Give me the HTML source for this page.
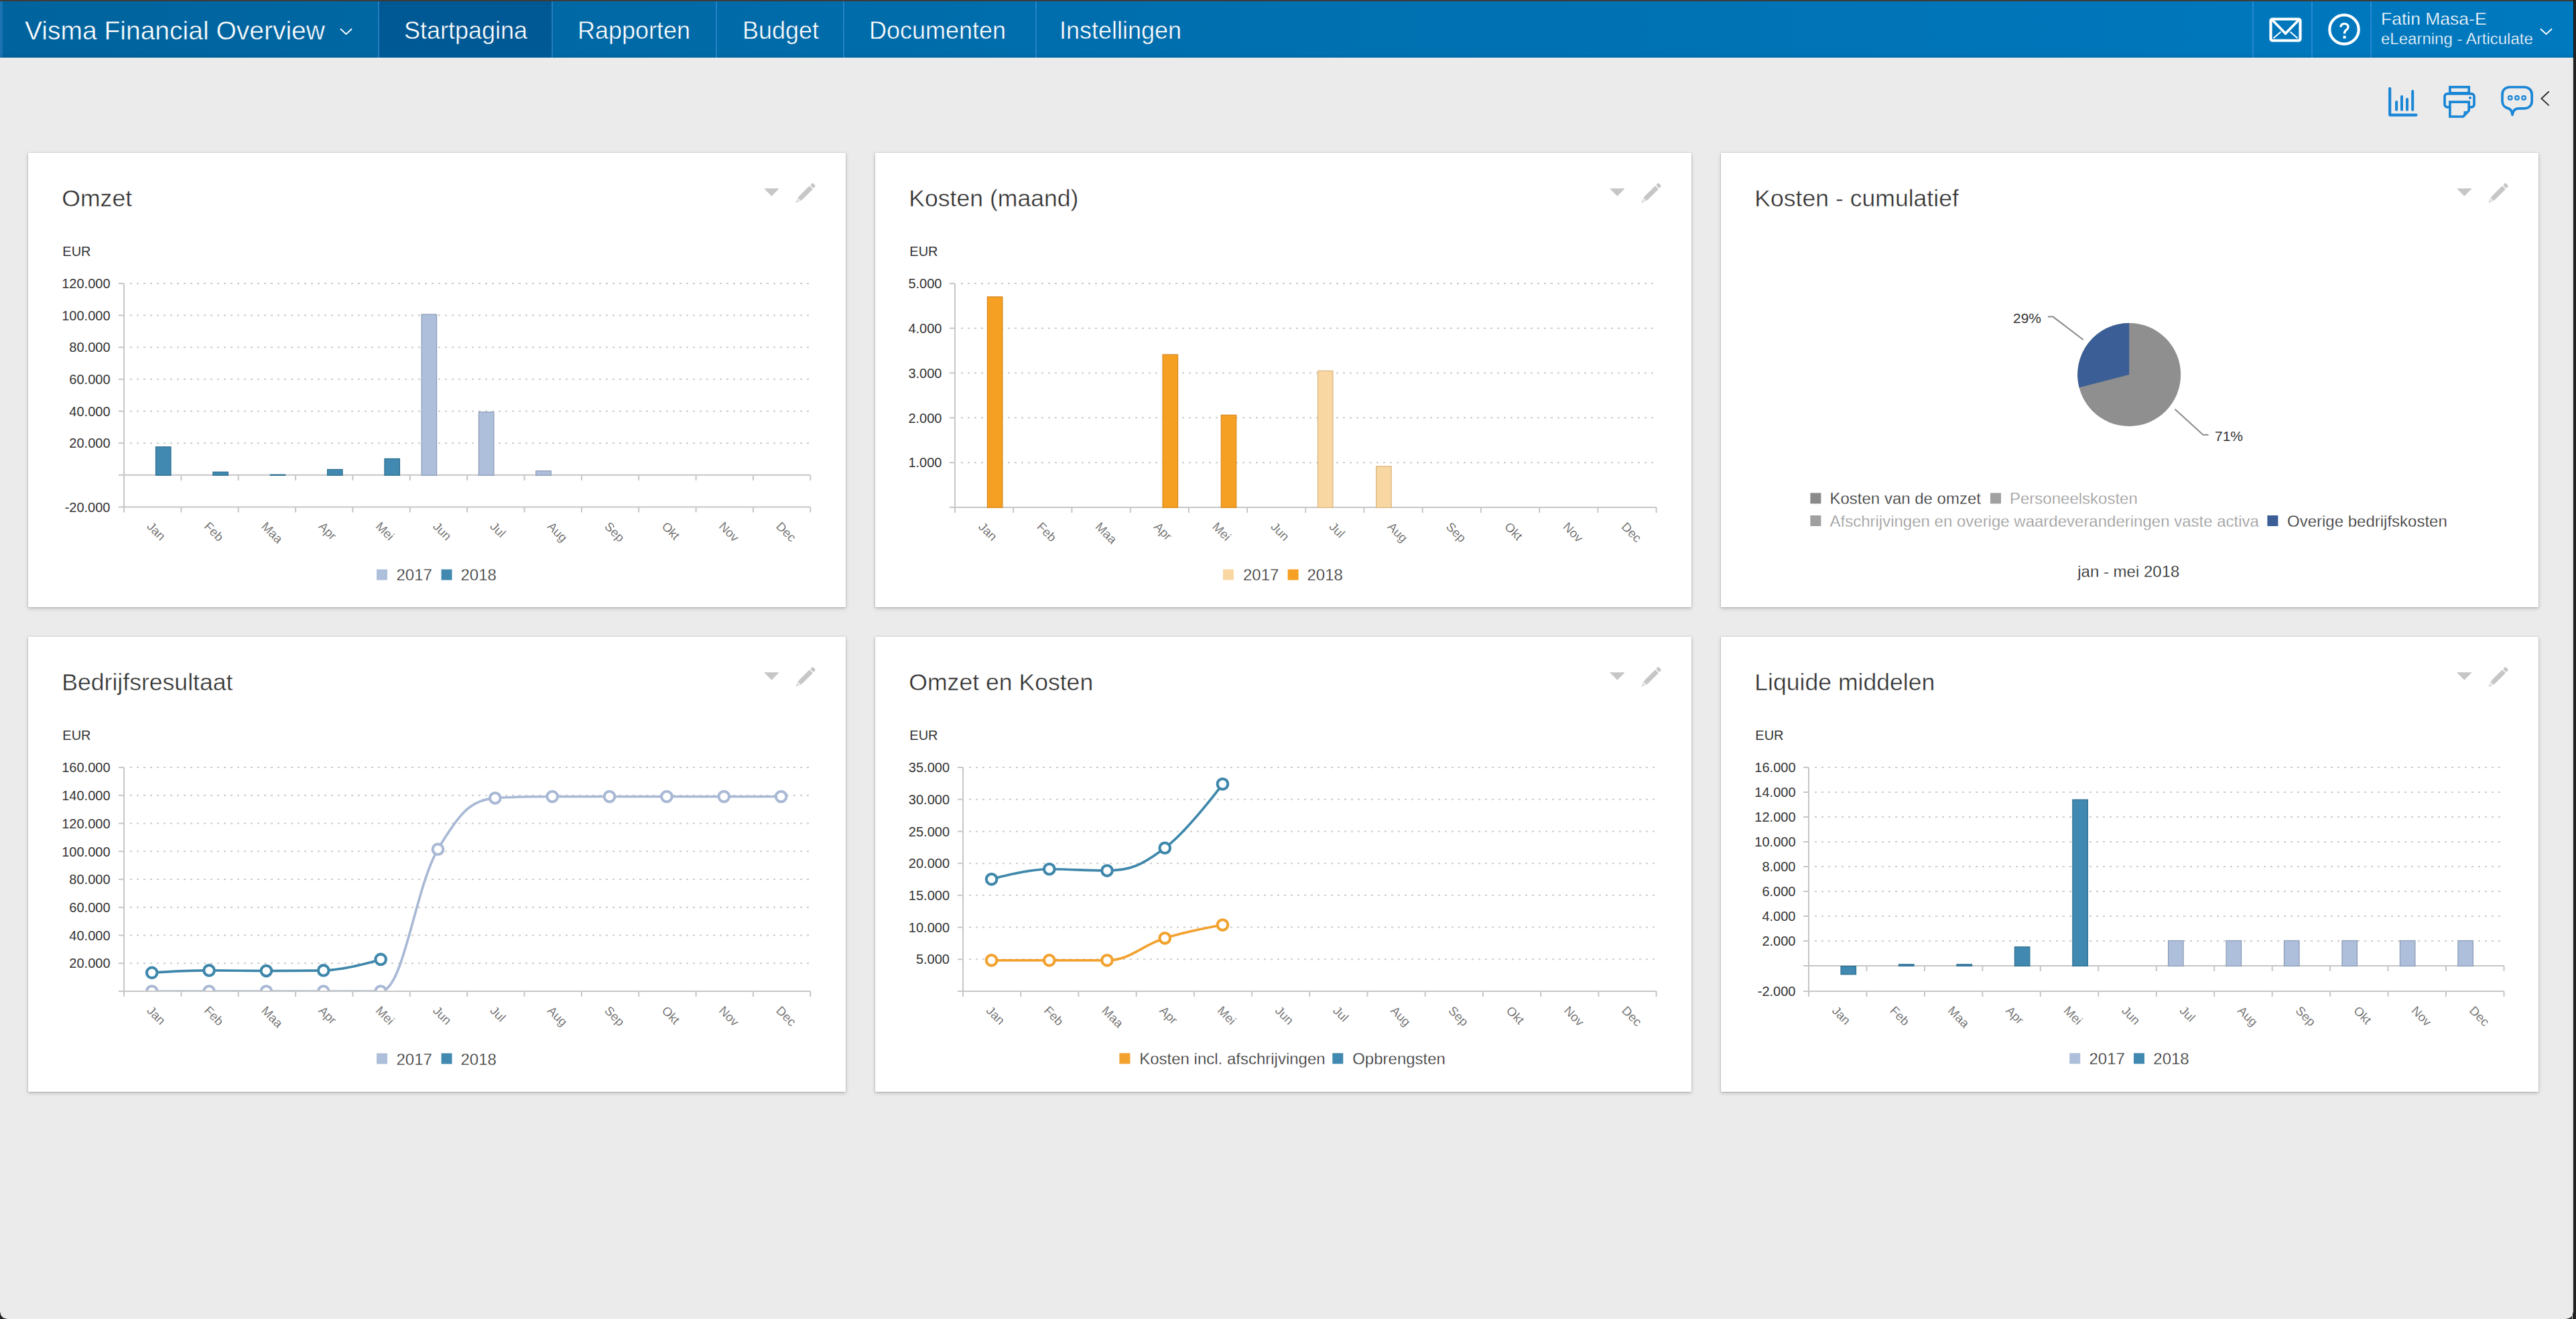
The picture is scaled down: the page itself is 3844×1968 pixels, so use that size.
<!DOCTYPE html><html><head><meta charset="utf-8"><title>Visma Financial Overview</title><style>

html,body{margin:0;padding:0;}
body{width:3844px;height:1968px;background:#ebebeb;position:relative;overflow:hidden;font-family:"Liberation Sans", sans-serif;}
.abs{position:absolute;}
.hdr{position:absolute;left:0;top:2px;width:3840px;height:84px;background:linear-gradient(to right,#00639d 0%,#0070b0 50%,#0079bf 100%);}
.div{position:absolute;top:0;width:2px;height:84px;background:rgba(80,160,230,0.45);}
.nav{position:absolute;top:1.5px;height:84px;line-height:84px;color:#fff;font-size:36px;white-space:nowrap;}
.panel{position:absolute;background:#fff;box-shadow:0 0 0 1px rgba(0,0,0,0.05),0 2px 6px rgba(0,0,0,0.18),0 1px 2px rgba(0,0,0,0.1);}
.title{position:absolute;font-size:36px;color:#2b2b2b;white-space:nowrap;line-height:1;}
svg text{font-family:"Liberation Sans", sans-serif;} svg text.t{stroke:#fff;stroke-width:0.45px;} svg text.lg{stroke:#fff;stroke-width:0.3px;} svg text.xl{stroke:#fff;stroke-width:0.25px;}

</style></head><body>
<div class="abs" style="left:0;top:1958px;width:10px;height:10px;background:radial-gradient(circle at 100% 0,rgba(35,35,35,0) 9px,#232323 10px)"></div>
<div class="abs" style="left:3830px;top:1958px;width:10px;height:10px;background:radial-gradient(circle at 0 0,rgba(35,35,35,0) 9px,#232323 10px)"></div>
<div class="abs" style="left:0;top:0;width:3844px;height:2px;background:#3c3c3c"></div>
<div class="abs" style="left:3838px;top:86px;width:1px;height:1882px;background:#dcdcdc"></div>
<div class="abs" style="left:3840px;top:0;width:4px;height:1968px;background:linear-gradient(to right,#111 0,#111 1px,#232323 1px)"></div>
<div class="hdr">
<div class="abs" style="left:0;top:0;width:4px;height:84px;background:#1b73b0"></div><div class="abs" style="left:0;top:78px;width:3840px;height:6px;background:linear-gradient(rgba(0,40,80,0),rgba(0,50,80,0.12))"></div>
<div class="abs" style="left:565px;top:0;width:259px;height:84px;background:linear-gradient(#005893,#005a96)"></div>
<div class="div" style="left:564px"></div>
<div class="div" style="left:823px"></div>
<div class="div" style="left:1068px"></div>
<div class="div" style="left:1258px"></div>
<div class="div" style="left:1545px"></div>
<div class="div" style="left:3361px"></div>
<div class="div" style="left:3449px"></div>
<div class="div" style="left:3537px"></div>
<div class="nav" style="left:37px;font-size:39px;-webkit-text-stroke:0.5px #00659f;">Visma Financial Overview</div>
<svg class="abs" style="left:505px;top:38px" width="24" height="16"><polyline points="3,3 11.5,11 20,3" fill="none" stroke="#fff" stroke-width="1.8"/></svg>
<div class="nav" style="left:603px;-webkit-text-stroke:0.5px #005a95;">Startpagina</div>
<div class="nav" style="left:862px;-webkit-text-stroke:0.5px #0068a4;">Rapporten</div>
<div class="nav" style="left:1108px;-webkit-text-stroke:0.5px #0069a6;">Budget</div>
<div class="nav" style="left:1297px;-webkit-text-stroke:0.5px #006aa8;">Documenten</div>
<div class="nav" style="left:1581px;-webkit-text-stroke:0.5px #006caa;">Instellingen</div>
<svg class="abs" style="left:3385px;top:22.5px" width="52" height="40" viewBox="0 0 52 40"><rect x="3.5" y="3.5" width="44" height="32" rx="2.5" fill="none" stroke="#fff" stroke-width="4.2"/><polyline points="6,5 25.5,25 45,5" fill="none" stroke="#fff" stroke-width="3.8"/><line x1="7.5" y1="32" x2="18.5" y2="22.5" stroke="#fff" stroke-width="2"/><line x1="32.5" y1="22.5" x2="43.5" y2="32" stroke="#fff" stroke-width="2"/></svg>
<svg class="abs" style="left:3472px;top:16px" width="52" height="52" viewBox="0 0 52 52"><circle cx="26" cy="26" r="21.7" fill="none" stroke="#fff" stroke-width="4.2"/><path d="M21,22.6 C21,19 23.3,17.4 26.5,17.4 C29.8,17.4 32,19.4 32,22.2 C32,24.6 30.5,25.7 28.7,27.1 C27.1,28.3 26.5,29.3 26.5,32.2" fill="none" stroke="#fff" stroke-width="3.3"/><rect x="24.5" y="35.4" width="4.1" height="4.1" fill="#fff"/></svg>
<div class="nav" style="left:3553px;top:9px;height:34px;line-height:34px;font-size:26.5px;-webkit-text-stroke:0.4px #0078be;">Fatin Masa-E</div>
<div class="nav" style="left:3553px;top:39px;height:34px;line-height:34px;font-size:24px;-webkit-text-stroke:0.4px #0078be;">eLearning - Articulate</div>
<svg class="abs" style="left:3788px;top:38px" width="24" height="16"><polyline points="3,3 11.5,11 20,3" fill="none" stroke="#fff" stroke-width="1.8"/></svg>
</div>
<svg class="abs" style="left:3560px;top:126px" width="52" height="52" viewBox="3560 126 52 52"><path d="M3566.2,132.2 V171.6 H3605.5" fill="none" stroke="#1a86d6" stroke-width="4.2" stroke-linecap="round" stroke-linejoin="round"/><line x1="3576.1" y1="152.1" x2="3576.1" y2="163.8" stroke="#1a86d6" stroke-width="4" stroke-linecap="round"/><line x1="3584" y1="144" x2="3584" y2="163.8" stroke="#1a86d6" stroke-width="4" stroke-linecap="round"/><line x1="3592" y1="148.1" x2="3592" y2="163.8" stroke="#1a86d6" stroke-width="4" stroke-linecap="round"/><line x1="3600.2" y1="135.9" x2="3600.2" y2="163.8" stroke="#1a86d6" stroke-width="4" stroke-linecap="round"/></svg>
<svg class="abs" style="left:3640px;top:124px" width="60" height="56" viewBox="3640 124 60 56"><rect x="3655.9" y="129.9" width="28.3" height="9" fill="none" stroke="#1a86d6" stroke-width="3.7"/><rect x="3648" y="139.9" width="44" height="19.9" rx="4" fill="none" stroke="#1a86d6" stroke-width="3.7"/><path d="M3655.9,152.1 H3684.2 V165 L3675.6,174 H3655.9 Z" fill="#ebebeb" stroke="#1a86d6" stroke-width="3.7"/><path d="M3684.2,166 L3676.5,174 V166 Z" fill="#1a86d6"/><circle cx="3686" cy="145.9" r="2" fill="#1a86d6"/></svg>
<svg class="abs" style="left:3728px;top:124px" width="90" height="56" viewBox="3728 124 90 56"><path d="M3745,130 H3767 C3773.5,130 3778.2,134.5 3778.2,141 V151 C3778.2,157.3 3773.5,161.8 3767,161.8 H3758 C3753.5,161.8 3750,165 3749.1,171.3 C3748.6,166 3746.5,162.6 3742.5,161.6 C3737.5,160.4 3734,156.5 3734,151 V141 C3734,134.5 3738.5,130 3745,130 Z" fill="none" stroke="#1a86d6" stroke-width="3.7" stroke-linejoin="round"/><circle cx="3745.8" cy="145.9" r="2.8" fill="none" stroke="#1a86d6" stroke-width="2.2"/><circle cx="3756" cy="145.9" r="2.8" fill="none" stroke="#1a86d6" stroke-width="2.2"/><circle cx="3766.1" cy="145.9" r="2.8" fill="none" stroke="#1a86d6" stroke-width="2.2"/><polyline points="3803.6,136.5 3792.4,147 3803.6,157.4" fill="none" stroke="#2a2a2a" stroke-width="1.8"/></svg>
<div class="panel" style="left:42px;top:228px;width:1220px;height:678px"></div>
<div class="panel" style="left:1306px;top:228px;width:1218px;height:678px"></div>
<div class="panel" style="left:2568px;top:228px;width:1220px;height:678px"></div>
<div class="panel" style="left:42px;top:950px;width:1220px;height:679px"></div>
<div class="panel" style="left:1306px;top:950px;width:1218px;height:679px"></div>
<div class="panel" style="left:2568px;top:950px;width:1220px;height:679px"></div>
<svg class="abs" style="left:0;top:0" width="3844" height="1968" viewBox="0 0 3844 1968"><text x="92.3" y="308.2" font-size="35.6" class="t" fill="#303030">Omzet</text>
<text x="93.3" y="382" font-size="20" fill="#333333">EUR</text>
<path d="M1140.8,281.6 L1162.0,281.6 L1151.3999999999999,292.20000000000005 Z" fill="#c6c6c6" stroke="#c6c6c6" stroke-width="0.8" stroke-linejoin="round"/>
<g transform="translate(1201.2,288.9) rotate(45) scale(0.93)"><rect x="-3.8" y="-21" width="7.6" height="5.5" rx="2.2" fill="#c6c6c6"/><rect x="-3.8" y="-14" width="7.6" height="24.5" fill="#c6c6c6"/><path d="M-3.8,10.5 L3.8,10.5 L0,21 Z" fill="#c6c6c6"/><path d="M-1.8,13 L1.8,13 L0,17.5 Z" fill="#fff"/></g>
<text x="1356.3" y="308.2" font-size="35.6" class="t" fill="#303030">Kosten (maand)</text>
<text x="1357.3" y="382" font-size="20" fill="#333333">EUR</text>
<path d="M2402.8,281.6 L2424.0,281.6 L2413.4,292.20000000000005 Z" fill="#c6c6c6" stroke="#c6c6c6" stroke-width="0.8" stroke-linejoin="round"/>
<g transform="translate(2463.2,288.9) rotate(45) scale(0.93)"><rect x="-3.8" y="-21" width="7.6" height="5.5" rx="2.2" fill="#c6c6c6"/><rect x="-3.8" y="-14" width="7.6" height="24.5" fill="#c6c6c6"/><path d="M-3.8,10.5 L3.8,10.5 L0,21 Z" fill="#c6c6c6"/><path d="M-1.8,13 L1.8,13 L0,17.5 Z" fill="#fff"/></g>
<text x="2618.3" y="308.2" font-size="35.6" class="t" fill="#303030">Kosten - cumulatief</text>
<path d="M3666.8,281.6 L3688.0,281.6 L3677.4,292.20000000000005 Z" fill="#c6c6c6" stroke="#c6c6c6" stroke-width="0.8" stroke-linejoin="round"/>
<g transform="translate(3727.2,288.9) rotate(45) scale(0.93)"><rect x="-3.8" y="-21" width="7.6" height="5.5" rx="2.2" fill="#c6c6c6"/><rect x="-3.8" y="-14" width="7.6" height="24.5" fill="#c6c6c6"/><path d="M-3.8,10.5 L3.8,10.5 L0,21 Z" fill="#c6c6c6"/><path d="M-1.8,13 L1.8,13 L0,17.5 Z" fill="#fff"/></g>
<text x="92.3" y="1030.2" font-size="35.6" class="t" fill="#303030">Bedrijfsresultaat</text>
<text x="93.3" y="1104" font-size="20" fill="#333333">EUR</text>
<path d="M1140.8,1003.6 L1162.0,1003.6 L1151.3999999999999,1014.2 Z" fill="#c6c6c6" stroke="#c6c6c6" stroke-width="0.8" stroke-linejoin="round"/>
<g transform="translate(1201.2,1010.9) rotate(45) scale(0.93)"><rect x="-3.8" y="-21" width="7.6" height="5.5" rx="2.2" fill="#c6c6c6"/><rect x="-3.8" y="-14" width="7.6" height="24.5" fill="#c6c6c6"/><path d="M-3.8,10.5 L3.8,10.5 L0,21 Z" fill="#c6c6c6"/><path d="M-1.8,13 L1.8,13 L0,17.5 Z" fill="#fff"/></g>
<text x="1356.3" y="1030.2" font-size="35.6" class="t" fill="#303030">Omzet en Kosten</text>
<text x="1357.3" y="1104" font-size="20" fill="#333333">EUR</text>
<path d="M2402.8,1003.6 L2424.0,1003.6 L2413.4,1014.2 Z" fill="#c6c6c6" stroke="#c6c6c6" stroke-width="0.8" stroke-linejoin="round"/>
<g transform="translate(2463.2,1010.9) rotate(45) scale(0.93)"><rect x="-3.8" y="-21" width="7.6" height="5.5" rx="2.2" fill="#c6c6c6"/><rect x="-3.8" y="-14" width="7.6" height="24.5" fill="#c6c6c6"/><path d="M-3.8,10.5 L3.8,10.5 L0,21 Z" fill="#c6c6c6"/><path d="M-1.8,13 L1.8,13 L0,17.5 Z" fill="#fff"/></g>
<text x="2618.3" y="1030.2" font-size="35.6" class="t" fill="#303030">Liquide middelen</text>
<text x="2619.3" y="1104" font-size="20" fill="#333333">EUR</text>
<path d="M3666.8,1003.6 L3688.0,1003.6 L3677.4,1014.2 Z" fill="#c6c6c6" stroke="#c6c6c6" stroke-width="0.8" stroke-linejoin="round"/>
<g transform="translate(3727.2,1010.9) rotate(45) scale(0.93)"><rect x="-3.8" y="-21" width="7.6" height="5.5" rx="2.2" fill="#c6c6c6"/><rect x="-3.8" y="-14" width="7.6" height="24.5" fill="#c6c6c6"/><path d="M-3.8,10.5 L3.8,10.5 L0,21 Z" fill="#c6c6c6"/><path d="M-1.8,13 L1.8,13 L0,17.5 Z" fill="#fff"/></g>
<line x1="177" y1="422.9" x2="185" y2="422.9" stroke="#c6c6c6" stroke-width="2"/>
<line x1="194" y1="422.9" x2="1209.3" y2="422.9" stroke="#cccccc" stroke-width="2" stroke-dasharray="3 7"/>
<text x="164.5" y="430.09999999999997" text-anchor="end" font-size="20" fill="#333333">120.000</text>
<line x1="177" y1="470.54999999999995" x2="185" y2="470.54999999999995" stroke="#c6c6c6" stroke-width="2"/>
<line x1="194" y1="470.54999999999995" x2="1209.3" y2="470.54999999999995" stroke="#cccccc" stroke-width="2" stroke-dasharray="3 7"/>
<text x="164.5" y="477.74999999999994" text-anchor="end" font-size="20" fill="#333333">100.000</text>
<line x1="177" y1="518.1999999999999" x2="185" y2="518.1999999999999" stroke="#c6c6c6" stroke-width="2"/>
<line x1="194" y1="518.1999999999999" x2="1209.3" y2="518.1999999999999" stroke="#cccccc" stroke-width="2" stroke-dasharray="3 7"/>
<text x="164.5" y="525.4" text-anchor="end" font-size="20" fill="#333333">80.000</text>
<line x1="177" y1="565.8499999999999" x2="185" y2="565.8499999999999" stroke="#c6c6c6" stroke-width="2"/>
<line x1="194" y1="565.8499999999999" x2="1209.3" y2="565.8499999999999" stroke="#cccccc" stroke-width="2" stroke-dasharray="3 7"/>
<text x="164.5" y="573.05" text-anchor="end" font-size="20" fill="#333333">60.000</text>
<line x1="177" y1="613.5" x2="185" y2="613.5" stroke="#c6c6c6" stroke-width="2"/>
<line x1="194" y1="613.5" x2="1209.3" y2="613.5" stroke="#cccccc" stroke-width="2" stroke-dasharray="3 7"/>
<text x="164.5" y="620.7" text-anchor="end" font-size="20" fill="#333333">40.000</text>
<line x1="177" y1="661.15" x2="185" y2="661.15" stroke="#c6c6c6" stroke-width="2"/>
<line x1="194" y1="661.15" x2="1209.3" y2="661.15" stroke="#cccccc" stroke-width="2" stroke-dasharray="3 7"/>
<text x="164.5" y="668.35" text-anchor="end" font-size="20" fill="#333333">20.000</text>
<line x1="177" y1="708.8" x2="1209.3" y2="708.8" stroke="#c6c6c6" stroke-width="2"/>
<line x1="177" y1="756.4499999999999" x2="1209.3" y2="756.4499999999999" stroke="#c6c6c6" stroke-width="2"/>
<text x="164.5" y="763.65" text-anchor="end" font-size="20" fill="#333333">-20.000</text>
<line x1="185" y1="422.9" x2="185" y2="764.4499999999999" stroke="#c6c6c6" stroke-width="2"/>
<line x1="270.4" y1="708.8" x2="270.4" y2="716.8" stroke="#c6c6c6" stroke-width="2"/>
<line x1="355.7" y1="708.8" x2="355.7" y2="716.8" stroke="#c6c6c6" stroke-width="2"/>
<line x1="441.1" y1="708.8" x2="441.1" y2="716.8" stroke="#c6c6c6" stroke-width="2"/>
<line x1="526.4" y1="708.8" x2="526.4" y2="716.8" stroke="#c6c6c6" stroke-width="2"/>
<line x1="611.8" y1="708.8" x2="611.8" y2="716.8" stroke="#c6c6c6" stroke-width="2"/>
<line x1="697.1" y1="708.8" x2="697.1" y2="716.8" stroke="#c6c6c6" stroke-width="2"/>
<line x1="782.5" y1="708.8" x2="782.5" y2="716.8" stroke="#c6c6c6" stroke-width="2"/>
<line x1="867.9" y1="708.8" x2="867.9" y2="716.8" stroke="#c6c6c6" stroke-width="2"/>
<line x1="953.2" y1="708.8" x2="953.2" y2="716.8" stroke="#c6c6c6" stroke-width="2"/>
<line x1="1038.6" y1="708.8" x2="1038.6" y2="716.8" stroke="#c6c6c6" stroke-width="2"/>
<line x1="1123.9" y1="708.8" x2="1123.9" y2="716.8" stroke="#c6c6c6" stroke-width="2"/>
<line x1="1209.3" y1="708.8" x2="1209.3" y2="716.8" stroke="#c6c6c6" stroke-width="2"/>
<line x1="270.4" y1="756.4499999999999" x2="270.4" y2="764.4499999999999" stroke="#c6c6c6" stroke-width="2"/>
<line x1="355.7" y1="756.4499999999999" x2="355.7" y2="764.4499999999999" stroke="#c6c6c6" stroke-width="2"/>
<line x1="441.1" y1="756.4499999999999" x2="441.1" y2="764.4499999999999" stroke="#c6c6c6" stroke-width="2"/>
<line x1="526.4" y1="756.4499999999999" x2="526.4" y2="764.4499999999999" stroke="#c6c6c6" stroke-width="2"/>
<line x1="611.8" y1="756.4499999999999" x2="611.8" y2="764.4499999999999" stroke="#c6c6c6" stroke-width="2"/>
<line x1="697.1" y1="756.4499999999999" x2="697.1" y2="764.4499999999999" stroke="#c6c6c6" stroke-width="2"/>
<line x1="782.5" y1="756.4499999999999" x2="782.5" y2="764.4499999999999" stroke="#c6c6c6" stroke-width="2"/>
<line x1="867.9" y1="756.4499999999999" x2="867.9" y2="764.4499999999999" stroke="#c6c6c6" stroke-width="2"/>
<line x1="953.2" y1="756.4499999999999" x2="953.2" y2="764.4499999999999" stroke="#c6c6c6" stroke-width="2"/>
<line x1="1038.6" y1="756.4499999999999" x2="1038.6" y2="764.4499999999999" stroke="#c6c6c6" stroke-width="2"/>
<line x1="1123.9" y1="756.4499999999999" x2="1123.9" y2="764.4499999999999" stroke="#c6c6c6" stroke-width="2"/>
<line x1="1209.3" y1="756.4499999999999" x2="1209.3" y2="764.4499999999999" stroke="#c6c6c6" stroke-width="2"/>
<text transform="translate(218.2,786.4) rotate(45)" font-size="18.5" class="xl" fill="#555555">Jan</text>
<text transform="translate(303.5,786.4) rotate(45)" font-size="18.5" class="xl" fill="#555555">Feb</text>
<text transform="translate(388.9,786.4) rotate(45)" font-size="18.5" class="xl" fill="#555555">Maa</text>
<text transform="translate(474.3,786.4) rotate(45)" font-size="18.5" class="xl" fill="#555555">Apr</text>
<text transform="translate(559.6,786.4) rotate(45)" font-size="18.5" class="xl" fill="#555555">Mei</text>
<text transform="translate(645.0,786.4) rotate(45)" font-size="18.5" class="xl" fill="#555555">Jun</text>
<text transform="translate(730.3,786.4) rotate(45)" font-size="18.5" class="xl" fill="#555555">Jul</text>
<text transform="translate(815.7,786.4) rotate(45)" font-size="18.5" class="xl" fill="#555555">Aug</text>
<text transform="translate(901.0,786.4) rotate(45)" font-size="18.5" class="xl" fill="#555555">Sep</text>
<text transform="translate(986.4,786.4) rotate(45)" font-size="18.5" class="xl" fill="#555555">Okt</text>
<text transform="translate(1071.8,786.4) rotate(45)" font-size="18.5" class="xl" fill="#555555">Nov</text>
<text transform="translate(1157.1,786.4) rotate(45)" font-size="18.5" class="xl" fill="#555555">Dec</text>
<rect x="629.07" y="469.01" width="22.5" height="240.19" fill="#adbfda" stroke="#8a9ab5" stroke-width="1.2"/>
<rect x="714.43" y="614.81" width="22.5" height="94.39" fill="#adbfda" stroke="#8a9ab5" stroke-width="1.2"/>
<rect x="799.79" y="702.61" width="22.5" height="6.59" fill="#adbfda" stroke="#8a9ab5" stroke-width="1.2"/>
<rect x="232.48" y="666.75" width="22.5" height="42.45" fill="#4189b0" stroke="#2d6d90" stroke-width="1.2"/>
<rect x="317.84" y="704.21" width="22.5" height="4.99" fill="#4189b0" stroke="#2d6d90" stroke-width="1.2"/>
<rect x="403.20" y="708.21" width="22.5" height="0.99" fill="#4189b0" stroke="#2d6d90" stroke-width="1.2"/>
<rect x="488.55" y="700.42" width="22.5" height="8.78" fill="#4189b0" stroke="#2d6d90" stroke-width="1.2"/>
<rect x="573.91" y="684.43" width="22.5" height="24.77" fill="#4189b0" stroke="#2d6d90" stroke-width="1.2"/>
<rect x="562" y="849.5" width="16" height="16" fill="#adbfda"/>
<text x="591.5" y="865.5" font-size="24" class="lg" fill="#333333">2017</text>
<rect x="658.5" y="849.5" width="16" height="16" fill="#4189b0"/>
<text x="687.5" y="865.5" font-size="24" class="lg" fill="#333333">2018</text>
<line x1="1417" y1="422.90000000000003" x2="1425" y2="422.90000000000003" stroke="#c6c6c6" stroke-width="2"/>
<line x1="1434" y1="422.90000000000003" x2="2471.6" y2="422.90000000000003" stroke="#cccccc" stroke-width="2" stroke-dasharray="3 7"/>
<text x="1405.5" y="430.1" text-anchor="end" font-size="20" fill="#333333">5.000</text>
<line x1="1417" y1="489.72" x2="1425" y2="489.72" stroke="#c6c6c6" stroke-width="2"/>
<line x1="1434" y1="489.72" x2="2471.6" y2="489.72" stroke="#cccccc" stroke-width="2" stroke-dasharray="3 7"/>
<text x="1405.5" y="496.92" text-anchor="end" font-size="20" fill="#333333">4.000</text>
<line x1="1417" y1="556.54" x2="1425" y2="556.54" stroke="#c6c6c6" stroke-width="2"/>
<line x1="1434" y1="556.54" x2="2471.6" y2="556.54" stroke="#cccccc" stroke-width="2" stroke-dasharray="3 7"/>
<text x="1405.5" y="563.74" text-anchor="end" font-size="20" fill="#333333">3.000</text>
<line x1="1417" y1="623.36" x2="1425" y2="623.36" stroke="#c6c6c6" stroke-width="2"/>
<line x1="1434" y1="623.36" x2="2471.6" y2="623.36" stroke="#cccccc" stroke-width="2" stroke-dasharray="3 7"/>
<text x="1405.5" y="630.5600000000001" text-anchor="end" font-size="20" fill="#333333">2.000</text>
<line x1="1417" y1="690.1800000000001" x2="1425" y2="690.1800000000001" stroke="#c6c6c6" stroke-width="2"/>
<line x1="1434" y1="690.1800000000001" x2="2471.6" y2="690.1800000000001" stroke="#cccccc" stroke-width="2" stroke-dasharray="3 7"/>
<text x="1405.5" y="697.3800000000001" text-anchor="end" font-size="20" fill="#333333">1.000</text>
<line x1="1417" y1="757.0" x2="2471.6" y2="757.0" stroke="#c6c6c6" stroke-width="2"/>
<line x1="1425" y1="422.90000000000003" x2="1425" y2="765.0" stroke="#c6c6c6" stroke-width="2"/>
<line x1="1512.2" y1="757.0" x2="1512.2" y2="765.0" stroke="#c6c6c6" stroke-width="2"/>
<line x1="1599.4" y1="757.0" x2="1599.4" y2="765.0" stroke="#c6c6c6" stroke-width="2"/>
<line x1="1686.7" y1="757.0" x2="1686.7" y2="765.0" stroke="#c6c6c6" stroke-width="2"/>
<line x1="1773.9" y1="757.0" x2="1773.9" y2="765.0" stroke="#c6c6c6" stroke-width="2"/>
<line x1="1861.1" y1="757.0" x2="1861.1" y2="765.0" stroke="#c6c6c6" stroke-width="2"/>
<line x1="1948.3" y1="757.0" x2="1948.3" y2="765.0" stroke="#c6c6c6" stroke-width="2"/>
<line x1="2035.5" y1="757.0" x2="2035.5" y2="765.0" stroke="#c6c6c6" stroke-width="2"/>
<line x1="2122.7" y1="757.0" x2="2122.7" y2="765.0" stroke="#c6c6c6" stroke-width="2"/>
<line x1="2209.9" y1="757.0" x2="2209.9" y2="765.0" stroke="#c6c6c6" stroke-width="2"/>
<line x1="2297.2" y1="757.0" x2="2297.2" y2="765.0" stroke="#c6c6c6" stroke-width="2"/>
<line x1="2384.4" y1="757.0" x2="2384.4" y2="765.0" stroke="#c6c6c6" stroke-width="2"/>
<line x1="2471.6" y1="757.0" x2="2471.6" y2="765.0" stroke="#c6c6c6" stroke-width="2"/>
<text transform="translate(1459.1,787.0) rotate(45)" font-size="18.5" class="xl" fill="#555555">Jan</text>
<text transform="translate(1546.3,787.0) rotate(45)" font-size="18.5" class="xl" fill="#555555">Feb</text>
<text transform="translate(1633.5,787.0) rotate(45)" font-size="18.5" class="xl" fill="#555555">Maa</text>
<text transform="translate(1720.8,787.0) rotate(45)" font-size="18.5" class="xl" fill="#555555">Apr</text>
<text transform="translate(1808.0,787.0) rotate(45)" font-size="18.5" class="xl" fill="#555555">Mei</text>
<text transform="translate(1895.2,787.0) rotate(45)" font-size="18.5" class="xl" fill="#555555">Jun</text>
<text transform="translate(1982.4,787.0) rotate(45)" font-size="18.5" class="xl" fill="#555555">Jul</text>
<text transform="translate(2069.6,787.0) rotate(45)" font-size="18.5" class="xl" fill="#555555">Aug</text>
<text transform="translate(2156.8,787.0) rotate(45)" font-size="18.5" class="xl" fill="#555555">Sep</text>
<text transform="translate(2244.1,787.0) rotate(45)" font-size="18.5" class="xl" fill="#555555">Okt</text>
<text transform="translate(2331.3,787.0) rotate(45)" font-size="18.5" class="xl" fill="#555555">Nov</text>
<text transform="translate(2418.5,787.0) rotate(45)" font-size="18.5" class="xl" fill="#555555">Dec</text>
<rect x="1966.51" y="553.33" width="22.5" height="204.07" fill="#f8d7a3" stroke="#d8b47c" stroke-width="1.2"/>
<rect x="2053.72" y="695.79" width="22.5" height="61.61" fill="#f8d7a3" stroke="#d8b47c" stroke-width="1.2"/>
<rect x="1473.41" y="442.88" width="22.5" height="314.52" fill="#f5a023" stroke="#d5861a" stroke-width="1.2"/>
<rect x="1735.06" y="529.08" width="22.5" height="228.32" fill="#f5a023" stroke="#d5861a" stroke-width="1.2"/>
<rect x="1822.27" y="619.28" width="22.5" height="138.12" fill="#f5a023" stroke="#d5861a" stroke-width="1.2"/>
<rect x="1825" y="849.5" width="16" height="16" fill="#f8d7a3"/>
<text x="1855" y="865.5" font-size="24" class="lg" fill="#333333">2017</text>
<rect x="1921.6" y="849.5" width="16" height="16" fill="#f5a023"/>
<text x="1950.5" y="865.5" font-size="24" class="lg" fill="#333333">2018</text>
<circle cx="3177.2" cy="559.0" r="77.0" fill="#8f8f8f"/>
<path d="M3177.2,559.0 L3177.2,482.0 A77.0,77.0 0 0 0 3102.62,578.15 Z" fill="#3a5e95"/>
<polyline points="3056,472.6 3063.6,472.6 3108.8,507" fill="none" stroke="#8a8a8a" stroke-width="2"/>
<polyline points="3245.5,610.6 3287.5,648.8 3295.6,648.8" fill="none" stroke="#8a8a8a" stroke-width="2"/>
<text x="3046" y="482" text-anchor="end" font-size="21" fill="#333333">29%</text>
<text x="3305" y="657.7" font-size="21" fill="#333333">71%</text>
<rect x="2701.4" y="735.5" width="16" height="16" fill="#8a8a8a"/>
<text x="2730.5" y="752" font-size="24" class="lg" fill="#333333">Kosten van de omzet</text>
<rect x="2970" y="735.5" width="16" height="16" fill="#a0a0a0"/>
<text x="2999" y="752" font-size="24" class="lg" fill="#9a9a9a">Personeelskosten</text>
<rect x="2701.4" y="769" width="16" height="16" fill="#a0a0a0"/>
<text x="2730.5" y="785.7" font-size="24" class="lg" fill="#9a9a9a">Afschrijvingen en overige waardeveranderingen vaste activa</text>
<rect x="3383.4" y="769" width="16" height="16" fill="#3a5e95"/>
<text x="3413" y="785.7" font-size="24" class="lg" fill="#333333">Overige bedrijfskosten</text>
<text x="3176.3" y="860.6" text-anchor="middle" font-size="24" class="lg" fill="#222">jan - mei 2018</text>
<line x1="177" y1="1145.08" x2="185" y2="1145.08" stroke="#c6c6c6" stroke-width="2"/>
<line x1="194" y1="1145.08" x2="1209.3" y2="1145.08" stroke="#cccccc" stroke-width="2" stroke-dasharray="3 7"/>
<text x="164.5" y="1152.28" text-anchor="end" font-size="20" fill="#333333">160.000</text>
<line x1="177" y1="1186.82" x2="185" y2="1186.82" stroke="#c6c6c6" stroke-width="2"/>
<line x1="194" y1="1186.82" x2="1209.3" y2="1186.82" stroke="#cccccc" stroke-width="2" stroke-dasharray="3 7"/>
<text x="164.5" y="1194.02" text-anchor="end" font-size="20" fill="#333333">140.000</text>
<line x1="177" y1="1228.56" x2="185" y2="1228.56" stroke="#c6c6c6" stroke-width="2"/>
<line x1="194" y1="1228.56" x2="1209.3" y2="1228.56" stroke="#cccccc" stroke-width="2" stroke-dasharray="3 7"/>
<text x="164.5" y="1235.76" text-anchor="end" font-size="20" fill="#333333">120.000</text>
<line x1="177" y1="1270.3" x2="185" y2="1270.3" stroke="#c6c6c6" stroke-width="2"/>
<line x1="194" y1="1270.3" x2="1209.3" y2="1270.3" stroke="#cccccc" stroke-width="2" stroke-dasharray="3 7"/>
<text x="164.5" y="1277.5" text-anchor="end" font-size="20" fill="#333333">100.000</text>
<line x1="177" y1="1312.04" x2="185" y2="1312.04" stroke="#c6c6c6" stroke-width="2"/>
<line x1="194" y1="1312.04" x2="1209.3" y2="1312.04" stroke="#cccccc" stroke-width="2" stroke-dasharray="3 7"/>
<text x="164.5" y="1319.24" text-anchor="end" font-size="20" fill="#333333">80.000</text>
<line x1="177" y1="1353.78" x2="185" y2="1353.78" stroke="#c6c6c6" stroke-width="2"/>
<line x1="194" y1="1353.78" x2="1209.3" y2="1353.78" stroke="#cccccc" stroke-width="2" stroke-dasharray="3 7"/>
<text x="164.5" y="1360.98" text-anchor="end" font-size="20" fill="#333333">60.000</text>
<line x1="177" y1="1395.52" x2="185" y2="1395.52" stroke="#c6c6c6" stroke-width="2"/>
<line x1="194" y1="1395.52" x2="1209.3" y2="1395.52" stroke="#cccccc" stroke-width="2" stroke-dasharray="3 7"/>
<text x="164.5" y="1402.72" text-anchor="end" font-size="20" fill="#333333">40.000</text>
<line x1="177" y1="1437.26" x2="185" y2="1437.26" stroke="#c6c6c6" stroke-width="2"/>
<line x1="194" y1="1437.26" x2="1209.3" y2="1437.26" stroke="#cccccc" stroke-width="2" stroke-dasharray="3 7"/>
<text x="164.5" y="1444.46" text-anchor="end" font-size="20" fill="#333333">20.000</text>
<line x1="177" y1="1479.0" x2="1209.3" y2="1479.0" stroke="#c6c6c6" stroke-width="2"/>
<line x1="185" y1="1145.08" x2="185" y2="1487.0" stroke="#c6c6c6" stroke-width="2"/>
<line x1="270.4" y1="1479.0" x2="270.4" y2="1487.0" stroke="#c6c6c6" stroke-width="2"/>
<line x1="355.7" y1="1479.0" x2="355.7" y2="1487.0" stroke="#c6c6c6" stroke-width="2"/>
<line x1="441.1" y1="1479.0" x2="441.1" y2="1487.0" stroke="#c6c6c6" stroke-width="2"/>
<line x1="526.4" y1="1479.0" x2="526.4" y2="1487.0" stroke="#c6c6c6" stroke-width="2"/>
<line x1="611.8" y1="1479.0" x2="611.8" y2="1487.0" stroke="#c6c6c6" stroke-width="2"/>
<line x1="697.1" y1="1479.0" x2="697.1" y2="1487.0" stroke="#c6c6c6" stroke-width="2"/>
<line x1="782.5" y1="1479.0" x2="782.5" y2="1487.0" stroke="#c6c6c6" stroke-width="2"/>
<line x1="867.9" y1="1479.0" x2="867.9" y2="1487.0" stroke="#c6c6c6" stroke-width="2"/>
<line x1="953.2" y1="1479.0" x2="953.2" y2="1487.0" stroke="#c6c6c6" stroke-width="2"/>
<line x1="1038.6" y1="1479.0" x2="1038.6" y2="1487.0" stroke="#c6c6c6" stroke-width="2"/>
<line x1="1123.9" y1="1479.0" x2="1123.9" y2="1487.0" stroke="#c6c6c6" stroke-width="2"/>
<line x1="1209.3" y1="1479.0" x2="1209.3" y2="1487.0" stroke="#c6c6c6" stroke-width="2"/>
<text transform="translate(218.2,1509.0) rotate(45)" font-size="18.5" class="xl" fill="#555555">Jan</text>
<text transform="translate(303.5,1509.0) rotate(45)" font-size="18.5" class="xl" fill="#555555">Feb</text>
<text transform="translate(388.9,1509.0) rotate(45)" font-size="18.5" class="xl" fill="#555555">Maa</text>
<text transform="translate(474.3,1509.0) rotate(45)" font-size="18.5" class="xl" fill="#555555">Apr</text>
<text transform="translate(559.6,1509.0) rotate(45)" font-size="18.5" class="xl" fill="#555555">Mei</text>
<text transform="translate(645.0,1509.0) rotate(45)" font-size="18.5" class="xl" fill="#555555">Jun</text>
<text transform="translate(730.3,1509.0) rotate(45)" font-size="18.5" class="xl" fill="#555555">Jul</text>
<text transform="translate(815.7,1509.0) rotate(45)" font-size="18.5" class="xl" fill="#555555">Aug</text>
<text transform="translate(901.0,1509.0) rotate(45)" font-size="18.5" class="xl" fill="#555555">Sep</text>
<text transform="translate(986.4,1509.0) rotate(45)" font-size="18.5" class="xl" fill="#555555">Okt</text>
<text transform="translate(1071.8,1509.0) rotate(45)" font-size="18.5" class="xl" fill="#555555">Nov</text>
<text transform="translate(1157.1,1509.0) rotate(45)" font-size="18.5" class="xl" fill="#555555">Dec</text>
<clipPath id="cp4"><rect x="185" y="1100" width="1044.3" height="379.0"/></clipPath>
<g clip-path="url(#cp4)">
<path d="M226.68,1479.00 C226.68,1479.00 277.89,1479.00 312.04,1479.00 C346.18,1479.00 363.25,1479.00 397.40,1479.00 C431.54,1479.00 448.61,1479.00 482.75,1479.00 C516.90,1479.00 533.97,1479.00 568.11,1479.00 C602.26,1479.00 619.33,1324.81 653.47,1267.17 C687.61,1209.53 704.69,1193.08 738.83,1190.79 C772.97,1188.49 790.04,1188.49 824.19,1188.49 C858.33,1188.49 875.40,1188.49 909.55,1188.49 C943.69,1188.49 960.76,1188.49 994.90,1188.49 C1029.05,1188.49 1046.12,1188.49 1080.26,1188.49 C1114.41,1188.49 1165.62,1188.49 1165.62,1188.49" fill="none" stroke="#a9b9d5" stroke-width="3.7"/>
<circle cx="226.68" cy="1479.00" r="7.8" fill="#fff" stroke="#a9b9d5" stroke-width="4.1"/>
<circle cx="312.04" cy="1479.00" r="7.8" fill="#fff" stroke="#a9b9d5" stroke-width="4.1"/>
<circle cx="397.40" cy="1479.00" r="7.8" fill="#fff" stroke="#a9b9d5" stroke-width="4.1"/>
<circle cx="482.75" cy="1479.00" r="7.8" fill="#fff" stroke="#a9b9d5" stroke-width="4.1"/>
<circle cx="568.11" cy="1479.00" r="7.8" fill="#fff" stroke="#a9b9d5" stroke-width="4.1"/>
<circle cx="653.47" cy="1267.17" r="7.8" fill="#fff" stroke="#a9b9d5" stroke-width="4.1"/>
<circle cx="738.83" cy="1190.79" r="7.8" fill="#fff" stroke="#a9b9d5" stroke-width="4.1"/>
<circle cx="824.19" cy="1188.49" r="7.8" fill="#fff" stroke="#a9b9d5" stroke-width="4.1"/>
<circle cx="909.55" cy="1188.49" r="7.8" fill="#fff" stroke="#a9b9d5" stroke-width="4.1"/>
<circle cx="994.90" cy="1188.49" r="7.8" fill="#fff" stroke="#a9b9d5" stroke-width="4.1"/>
<circle cx="1080.26" cy="1188.49" r="7.8" fill="#fff" stroke="#a9b9d5" stroke-width="4.1"/>
<circle cx="1165.62" cy="1188.49" r="7.8" fill="#fff" stroke="#a9b9d5" stroke-width="4.1"/>
</g>
<line x1="177" y1="1479.0" x2="1209.3" y2="1479.0" stroke="#c6c6c6" stroke-width="2"/>
<path d="M226.68,1451.35 C226.68,1451.35 277.89,1447.95 312.04,1447.95 C346.18,1447.95 363.25,1448.53 397.40,1448.53 C431.54,1448.53 448.61,1448.53 482.75,1447.95 C516.90,1447.36 568.11,1431.42 568.11,1431.42" fill="none" stroke="#3e87ab" stroke-width="3.7"/>
<circle cx="226.68" cy="1451.35" r="7.8" fill="#fff" stroke="#3e87ab" stroke-width="4.1"/>
<circle cx="312.04" cy="1447.95" r="7.8" fill="#fff" stroke="#3e87ab" stroke-width="4.1"/>
<circle cx="397.40" cy="1448.53" r="7.8" fill="#fff" stroke="#3e87ab" stroke-width="4.1"/>
<circle cx="482.75" cy="1447.95" r="7.8" fill="#fff" stroke="#3e87ab" stroke-width="4.1"/>
<circle cx="568.11" cy="1431.42" r="7.8" fill="#fff" stroke="#3e87ab" stroke-width="4.1"/>
<rect x="562" y="1571.5" width="16" height="16" fill="#adbfda"/>
<text x="591.5" y="1588.5" font-size="24" class="lg" fill="#333333">2017</text>
<rect x="658.5" y="1571.5" width="16" height="16" fill="#4189b0"/>
<text x="687.5" y="1588.5" font-size="24" class="lg" fill="#333333">2018</text>
<line x1="1429" y1="1145.03" x2="1437" y2="1145.03" stroke="#c6c6c6" stroke-width="2"/>
<line x1="1446" y1="1145.03" x2="2471.6" y2="1145.03" stroke="#cccccc" stroke-width="2" stroke-dasharray="3 7"/>
<text x="1417" y="1152.23" text-anchor="end" font-size="20" fill="#333333">35.000</text>
<line x1="1429" y1="1192.74" x2="1437" y2="1192.74" stroke="#c6c6c6" stroke-width="2"/>
<line x1="1446" y1="1192.74" x2="2471.6" y2="1192.74" stroke="#cccccc" stroke-width="2" stroke-dasharray="3 7"/>
<text x="1417" y="1199.94" text-anchor="end" font-size="20" fill="#333333">30.000</text>
<line x1="1429" y1="1240.45" x2="1437" y2="1240.45" stroke="#c6c6c6" stroke-width="2"/>
<line x1="1446" y1="1240.45" x2="2471.6" y2="1240.45" stroke="#cccccc" stroke-width="2" stroke-dasharray="3 7"/>
<text x="1417" y="1247.65" text-anchor="end" font-size="20" fill="#333333">25.000</text>
<line x1="1429" y1="1288.16" x2="1437" y2="1288.16" stroke="#c6c6c6" stroke-width="2"/>
<line x1="1446" y1="1288.16" x2="2471.6" y2="1288.16" stroke="#cccccc" stroke-width="2" stroke-dasharray="3 7"/>
<text x="1417" y="1295.3600000000001" text-anchor="end" font-size="20" fill="#333333">20.000</text>
<line x1="1429" y1="1335.87" x2="1437" y2="1335.87" stroke="#c6c6c6" stroke-width="2"/>
<line x1="1446" y1="1335.87" x2="2471.6" y2="1335.87" stroke="#cccccc" stroke-width="2" stroke-dasharray="3 7"/>
<text x="1417" y="1343.07" text-anchor="end" font-size="20" fill="#333333">15.000</text>
<line x1="1429" y1="1383.58" x2="1437" y2="1383.58" stroke="#c6c6c6" stroke-width="2"/>
<line x1="1446" y1="1383.58" x2="2471.6" y2="1383.58" stroke="#cccccc" stroke-width="2" stroke-dasharray="3 7"/>
<text x="1417" y="1390.78" text-anchor="end" font-size="20" fill="#333333">10.000</text>
<line x1="1429" y1="1431.29" x2="1437" y2="1431.29" stroke="#c6c6c6" stroke-width="2"/>
<line x1="1446" y1="1431.29" x2="2471.6" y2="1431.29" stroke="#cccccc" stroke-width="2" stroke-dasharray="3 7"/>
<text x="1417" y="1438.49" text-anchor="end" font-size="20" fill="#333333">5.000</text>
<line x1="1429" y1="1479.0" x2="2471.6" y2="1479.0" stroke="#c6c6c6" stroke-width="2"/>
<line x1="1437" y1="1145.03" x2="1437" y2="1487.0" stroke="#c6c6c6" stroke-width="2"/>
<line x1="1523.2" y1="1479.0" x2="1523.2" y2="1487.0" stroke="#c6c6c6" stroke-width="2"/>
<line x1="1609.4" y1="1479.0" x2="1609.4" y2="1487.0" stroke="#c6c6c6" stroke-width="2"/>
<line x1="1695.7" y1="1479.0" x2="1695.7" y2="1487.0" stroke="#c6c6c6" stroke-width="2"/>
<line x1="1781.9" y1="1479.0" x2="1781.9" y2="1487.0" stroke="#c6c6c6" stroke-width="2"/>
<line x1="1868.1" y1="1479.0" x2="1868.1" y2="1487.0" stroke="#c6c6c6" stroke-width="2"/>
<line x1="1954.3" y1="1479.0" x2="1954.3" y2="1487.0" stroke="#c6c6c6" stroke-width="2"/>
<line x1="2040.5" y1="1479.0" x2="2040.5" y2="1487.0" stroke="#c6c6c6" stroke-width="2"/>
<line x1="2126.7" y1="1479.0" x2="2126.7" y2="1487.0" stroke="#c6c6c6" stroke-width="2"/>
<line x1="2212.9" y1="1479.0" x2="2212.9" y2="1487.0" stroke="#c6c6c6" stroke-width="2"/>
<line x1="2299.2" y1="1479.0" x2="2299.2" y2="1487.0" stroke="#c6c6c6" stroke-width="2"/>
<line x1="2385.4" y1="1479.0" x2="2385.4" y2="1487.0" stroke="#c6c6c6" stroke-width="2"/>
<line x1="2471.6" y1="1479.0" x2="2471.6" y2="1487.0" stroke="#c6c6c6" stroke-width="2"/>
<text transform="translate(1470.6,1509.0) rotate(45)" font-size="18.5" class="xl" fill="#555555">Jan</text>
<text transform="translate(1556.8,1509.0) rotate(45)" font-size="18.5" class="xl" fill="#555555">Feb</text>
<text transform="translate(1643.0,1509.0) rotate(45)" font-size="18.5" class="xl" fill="#555555">Maa</text>
<text transform="translate(1729.3,1509.0) rotate(45)" font-size="18.5" class="xl" fill="#555555">Apr</text>
<text transform="translate(1815.5,1509.0) rotate(45)" font-size="18.5" class="xl" fill="#555555">Mei</text>
<text transform="translate(1901.7,1509.0) rotate(45)" font-size="18.5" class="xl" fill="#555555">Jun</text>
<text transform="translate(1987.9,1509.0) rotate(45)" font-size="18.5" class="xl" fill="#555555">Jul</text>
<text transform="translate(2074.1,1509.0) rotate(45)" font-size="18.5" class="xl" fill="#555555">Aug</text>
<text transform="translate(2160.3,1509.0) rotate(45)" font-size="18.5" class="xl" fill="#555555">Sep</text>
<text transform="translate(2246.6,1509.0) rotate(45)" font-size="18.5" class="xl" fill="#555555">Okt</text>
<text transform="translate(2332.8,1509.0) rotate(45)" font-size="18.5" class="xl" fill="#555555">Nov</text>
<text transform="translate(2419.0,1509.0) rotate(45)" font-size="18.5" class="xl" fill="#555555">Dec</text>
<path d="M1479.61,1432.82 C1479.61,1432.82 1531.34,1432.82 1565.83,1432.82 C1600.31,1432.82 1617.55,1432.82 1652.04,1432.82 C1686.53,1432.82 1703.77,1410.35 1738.26,1399.80 C1772.74,1389.25 1824.47,1380.05 1824.47,1380.05" fill="none" stroke="#f2a12e" stroke-width="3.7"/>
<circle cx="1479.61" cy="1432.82" r="7.8" fill="#fff" stroke="#f2a12e" stroke-width="4.1"/>
<circle cx="1565.83" cy="1432.82" r="7.8" fill="#fff" stroke="#f2a12e" stroke-width="4.1"/>
<circle cx="1652.04" cy="1432.82" r="7.8" fill="#fff" stroke="#f2a12e" stroke-width="4.1"/>
<circle cx="1738.26" cy="1399.80" r="7.8" fill="#fff" stroke="#f2a12e" stroke-width="4.1"/>
<circle cx="1824.47" cy="1380.05" r="7.8" fill="#fff" stroke="#f2a12e" stroke-width="4.1"/>
<path d="M1479.61,1311.82 C1479.61,1311.82 1531.34,1296.75 1565.83,1296.75 C1600.31,1296.75 1617.55,1299.04 1652.04,1299.04 C1686.53,1299.04 1703.77,1291.10 1738.26,1265.26 C1772.74,1239.42 1824.47,1169.84 1824.47,1169.84" fill="none" stroke="#3e87ab" stroke-width="3.7"/>
<circle cx="1479.61" cy="1311.82" r="7.8" fill="#fff" stroke="#3e87ab" stroke-width="4.1"/>
<circle cx="1565.83" cy="1296.75" r="7.8" fill="#fff" stroke="#3e87ab" stroke-width="4.1"/>
<circle cx="1652.04" cy="1299.04" r="7.8" fill="#fff" stroke="#3e87ab" stroke-width="4.1"/>
<circle cx="1738.26" cy="1265.26" r="7.8" fill="#fff" stroke="#3e87ab" stroke-width="4.1"/>
<circle cx="1824.47" cy="1169.84" r="7.8" fill="#fff" stroke="#3e87ab" stroke-width="4.1"/>
<rect x="1670.4" y="1571.3" width="16" height="16" fill="#f2a12e"/>
<text x="1700.2" y="1588.3" font-size="24" class="lg" fill="#333333">Kosten incl. afschrijvingen</text>
<rect x="1988.3" y="1571.3" width="16" height="16" fill="#4189b0"/>
<text x="2018.2" y="1588.3" font-size="24" class="lg" fill="#333333">Opbrengsten</text>
<line x1="2691" y1="1145.0" x2="2699" y2="1145.0" stroke="#c6c6c6" stroke-width="2"/>
<line x1="2708" y1="1145.0" x2="3736.5" y2="1145.0" stroke="#cccccc" stroke-width="2" stroke-dasharray="3 7"/>
<text x="2679.5" y="1152.2" text-anchor="end" font-size="20" fill="#333333">16.000</text>
<line x1="2691" y1="1182.0" x2="2699" y2="1182.0" stroke="#c6c6c6" stroke-width="2"/>
<line x1="2708" y1="1182.0" x2="3736.5" y2="1182.0" stroke="#cccccc" stroke-width="2" stroke-dasharray="3 7"/>
<text x="2679.5" y="1189.2" text-anchor="end" font-size="20" fill="#333333">14.000</text>
<line x1="2691" y1="1219.0" x2="2699" y2="1219.0" stroke="#c6c6c6" stroke-width="2"/>
<line x1="2708" y1="1219.0" x2="3736.5" y2="1219.0" stroke="#cccccc" stroke-width="2" stroke-dasharray="3 7"/>
<text x="2679.5" y="1226.2" text-anchor="end" font-size="20" fill="#333333">12.000</text>
<line x1="2691" y1="1256.0" x2="2699" y2="1256.0" stroke="#c6c6c6" stroke-width="2"/>
<line x1="2708" y1="1256.0" x2="3736.5" y2="1256.0" stroke="#cccccc" stroke-width="2" stroke-dasharray="3 7"/>
<text x="2679.5" y="1263.2" text-anchor="end" font-size="20" fill="#333333">10.000</text>
<line x1="2691" y1="1293.0" x2="2699" y2="1293.0" stroke="#c6c6c6" stroke-width="2"/>
<line x1="2708" y1="1293.0" x2="3736.5" y2="1293.0" stroke="#cccccc" stroke-width="2" stroke-dasharray="3 7"/>
<text x="2679.5" y="1300.2" text-anchor="end" font-size="20" fill="#333333">8.000</text>
<line x1="2691" y1="1330.0" x2="2699" y2="1330.0" stroke="#c6c6c6" stroke-width="2"/>
<line x1="2708" y1="1330.0" x2="3736.5" y2="1330.0" stroke="#cccccc" stroke-width="2" stroke-dasharray="3 7"/>
<text x="2679.5" y="1337.2" text-anchor="end" font-size="20" fill="#333333">6.000</text>
<line x1="2691" y1="1367.0" x2="2699" y2="1367.0" stroke="#c6c6c6" stroke-width="2"/>
<line x1="2708" y1="1367.0" x2="3736.5" y2="1367.0" stroke="#cccccc" stroke-width="2" stroke-dasharray="3 7"/>
<text x="2679.5" y="1374.2" text-anchor="end" font-size="20" fill="#333333">4.000</text>
<line x1="2691" y1="1404.0" x2="2699" y2="1404.0" stroke="#c6c6c6" stroke-width="2"/>
<line x1="2708" y1="1404.0" x2="3736.5" y2="1404.0" stroke="#cccccc" stroke-width="2" stroke-dasharray="3 7"/>
<text x="2679.5" y="1411.2" text-anchor="end" font-size="20" fill="#333333">2.000</text>
<line x1="2691" y1="1441.0" x2="3736.5" y2="1441.0" stroke="#c6c6c6" stroke-width="2"/>
<line x1="2691" y1="1479.0" x2="3736.5" y2="1479.0" stroke="#c6c6c6" stroke-width="2"/>
<text x="2679.5" y="1486.2" text-anchor="end" font-size="20" fill="#333333">-2.000</text>
<line x1="2699" y1="1145.0" x2="2699" y2="1487.0" stroke="#c6c6c6" stroke-width="2"/>
<line x1="2785.5" y1="1441.0" x2="2785.5" y2="1449.0" stroke="#c6c6c6" stroke-width="2"/>
<line x1="2871.9" y1="1441.0" x2="2871.9" y2="1449.0" stroke="#c6c6c6" stroke-width="2"/>
<line x1="2958.4" y1="1441.0" x2="2958.4" y2="1449.0" stroke="#c6c6c6" stroke-width="2"/>
<line x1="3044.8" y1="1441.0" x2="3044.8" y2="1449.0" stroke="#c6c6c6" stroke-width="2"/>
<line x1="3131.3" y1="1441.0" x2="3131.3" y2="1449.0" stroke="#c6c6c6" stroke-width="2"/>
<line x1="3217.8" y1="1441.0" x2="3217.8" y2="1449.0" stroke="#c6c6c6" stroke-width="2"/>
<line x1="3304.2" y1="1441.0" x2="3304.2" y2="1449.0" stroke="#c6c6c6" stroke-width="2"/>
<line x1="3390.7" y1="1441.0" x2="3390.7" y2="1449.0" stroke="#c6c6c6" stroke-width="2"/>
<line x1="3477.1" y1="1441.0" x2="3477.1" y2="1449.0" stroke="#c6c6c6" stroke-width="2"/>
<line x1="3563.6" y1="1441.0" x2="3563.6" y2="1449.0" stroke="#c6c6c6" stroke-width="2"/>
<line x1="3650.0" y1="1441.0" x2="3650.0" y2="1449.0" stroke="#c6c6c6" stroke-width="2"/>
<line x1="3736.5" y1="1441.0" x2="3736.5" y2="1449.0" stroke="#c6c6c6" stroke-width="2"/>
<line x1="2785.5" y1="1479.0" x2="2785.5" y2="1487.0" stroke="#c6c6c6" stroke-width="2"/>
<line x1="2871.9" y1="1479.0" x2="2871.9" y2="1487.0" stroke="#c6c6c6" stroke-width="2"/>
<line x1="2958.4" y1="1479.0" x2="2958.4" y2="1487.0" stroke="#c6c6c6" stroke-width="2"/>
<line x1="3044.8" y1="1479.0" x2="3044.8" y2="1487.0" stroke="#c6c6c6" stroke-width="2"/>
<line x1="3131.3" y1="1479.0" x2="3131.3" y2="1487.0" stroke="#c6c6c6" stroke-width="2"/>
<line x1="3217.8" y1="1479.0" x2="3217.8" y2="1487.0" stroke="#c6c6c6" stroke-width="2"/>
<line x1="3304.2" y1="1479.0" x2="3304.2" y2="1487.0" stroke="#c6c6c6" stroke-width="2"/>
<line x1="3390.7" y1="1479.0" x2="3390.7" y2="1487.0" stroke="#c6c6c6" stroke-width="2"/>
<line x1="3477.1" y1="1479.0" x2="3477.1" y2="1487.0" stroke="#c6c6c6" stroke-width="2"/>
<line x1="3563.6" y1="1479.0" x2="3563.6" y2="1487.0" stroke="#c6c6c6" stroke-width="2"/>
<line x1="3650.0" y1="1479.0" x2="3650.0" y2="1487.0" stroke="#c6c6c6" stroke-width="2"/>
<line x1="3736.5" y1="1479.0" x2="3736.5" y2="1487.0" stroke="#c6c6c6" stroke-width="2"/>
<text transform="translate(2732.7,1509.0) rotate(45)" font-size="18.5" class="xl" fill="#555555">Jan</text>
<text transform="translate(2819.2,1509.0) rotate(45)" font-size="18.5" class="xl" fill="#555555">Feb</text>
<text transform="translate(2905.6,1509.0) rotate(45)" font-size="18.5" class="xl" fill="#555555">Maa</text>
<text transform="translate(2992.1,1509.0) rotate(45)" font-size="18.5" class="xl" fill="#555555">Apr</text>
<text transform="translate(3078.6,1509.0) rotate(45)" font-size="18.5" class="xl" fill="#555555">Mei</text>
<text transform="translate(3165.0,1509.0) rotate(45)" font-size="18.5" class="xl" fill="#555555">Jun</text>
<text transform="translate(3251.5,1509.0) rotate(45)" font-size="18.5" class="xl" fill="#555555">Jul</text>
<text transform="translate(3337.9,1509.0) rotate(45)" font-size="18.5" class="xl" fill="#555555">Aug</text>
<text transform="translate(3424.4,1509.0) rotate(45)" font-size="18.5" class="xl" fill="#555555">Sep</text>
<text transform="translate(3510.9,1509.0) rotate(45)" font-size="18.5" class="xl" fill="#555555">Okt</text>
<text transform="translate(3597.3,1509.0) rotate(45)" font-size="18.5" class="xl" fill="#555555">Nov</text>
<text transform="translate(3683.8,1509.0) rotate(45)" font-size="18.5" class="xl" fill="#555555">Dec</text>
<rect x="3235.58" y="1403.49" width="22.5" height="37.91" fill="#adbfda" stroke="#8a9ab5" stroke-width="1.2"/>
<rect x="3322.04" y="1403.49" width="22.5" height="37.91" fill="#adbfda" stroke="#8a9ab5" stroke-width="1.2"/>
<rect x="3408.50" y="1403.49" width="22.5" height="37.91" fill="#adbfda" stroke="#8a9ab5" stroke-width="1.2"/>
<rect x="3494.95" y="1403.49" width="22.5" height="37.91" fill="#adbfda" stroke="#8a9ab5" stroke-width="1.2"/>
<rect x="3581.41" y="1403.49" width="22.5" height="37.91" fill="#adbfda" stroke="#8a9ab5" stroke-width="1.2"/>
<rect x="3667.87" y="1403.49" width="22.5" height="37.91" fill="#adbfda" stroke="#8a9ab5" stroke-width="1.2"/>
<rect x="2747.03" y="1441.60" width="22.5" height="12.29" fill="#4189b0" stroke="#2d6d90" stroke-width="1.2"/>
<rect x="2833.49" y="1438.82" width="22.5" height="2.57" fill="#4189b0" stroke="#2d6d90" stroke-width="1.2"/>
<rect x="2919.95" y="1438.82" width="22.5" height="2.57" fill="#4189b0" stroke="#2d6d90" stroke-width="1.2"/>
<rect x="3006.40" y="1412.80" width="22.5" height="28.60" fill="#4189b0" stroke="#2d6d90" stroke-width="1.2"/>
<rect x="3092.86" y="1193.14" width="22.5" height="248.25" fill="#4189b0" stroke="#2d6d90" stroke-width="1.2"/>
<rect x="3088.2" y="1571.3" width="16" height="16" fill="#adbfda"/>
<text x="3117.5" y="1588.3" font-size="24" class="lg" fill="#333333">2017</text>
<rect x="3184" y="1571.3" width="16" height="16" fill="#4189b0"/>
<text x="3213.3" y="1588.3" font-size="24" class="lg" fill="#333333">2018</text></svg></body></html>
